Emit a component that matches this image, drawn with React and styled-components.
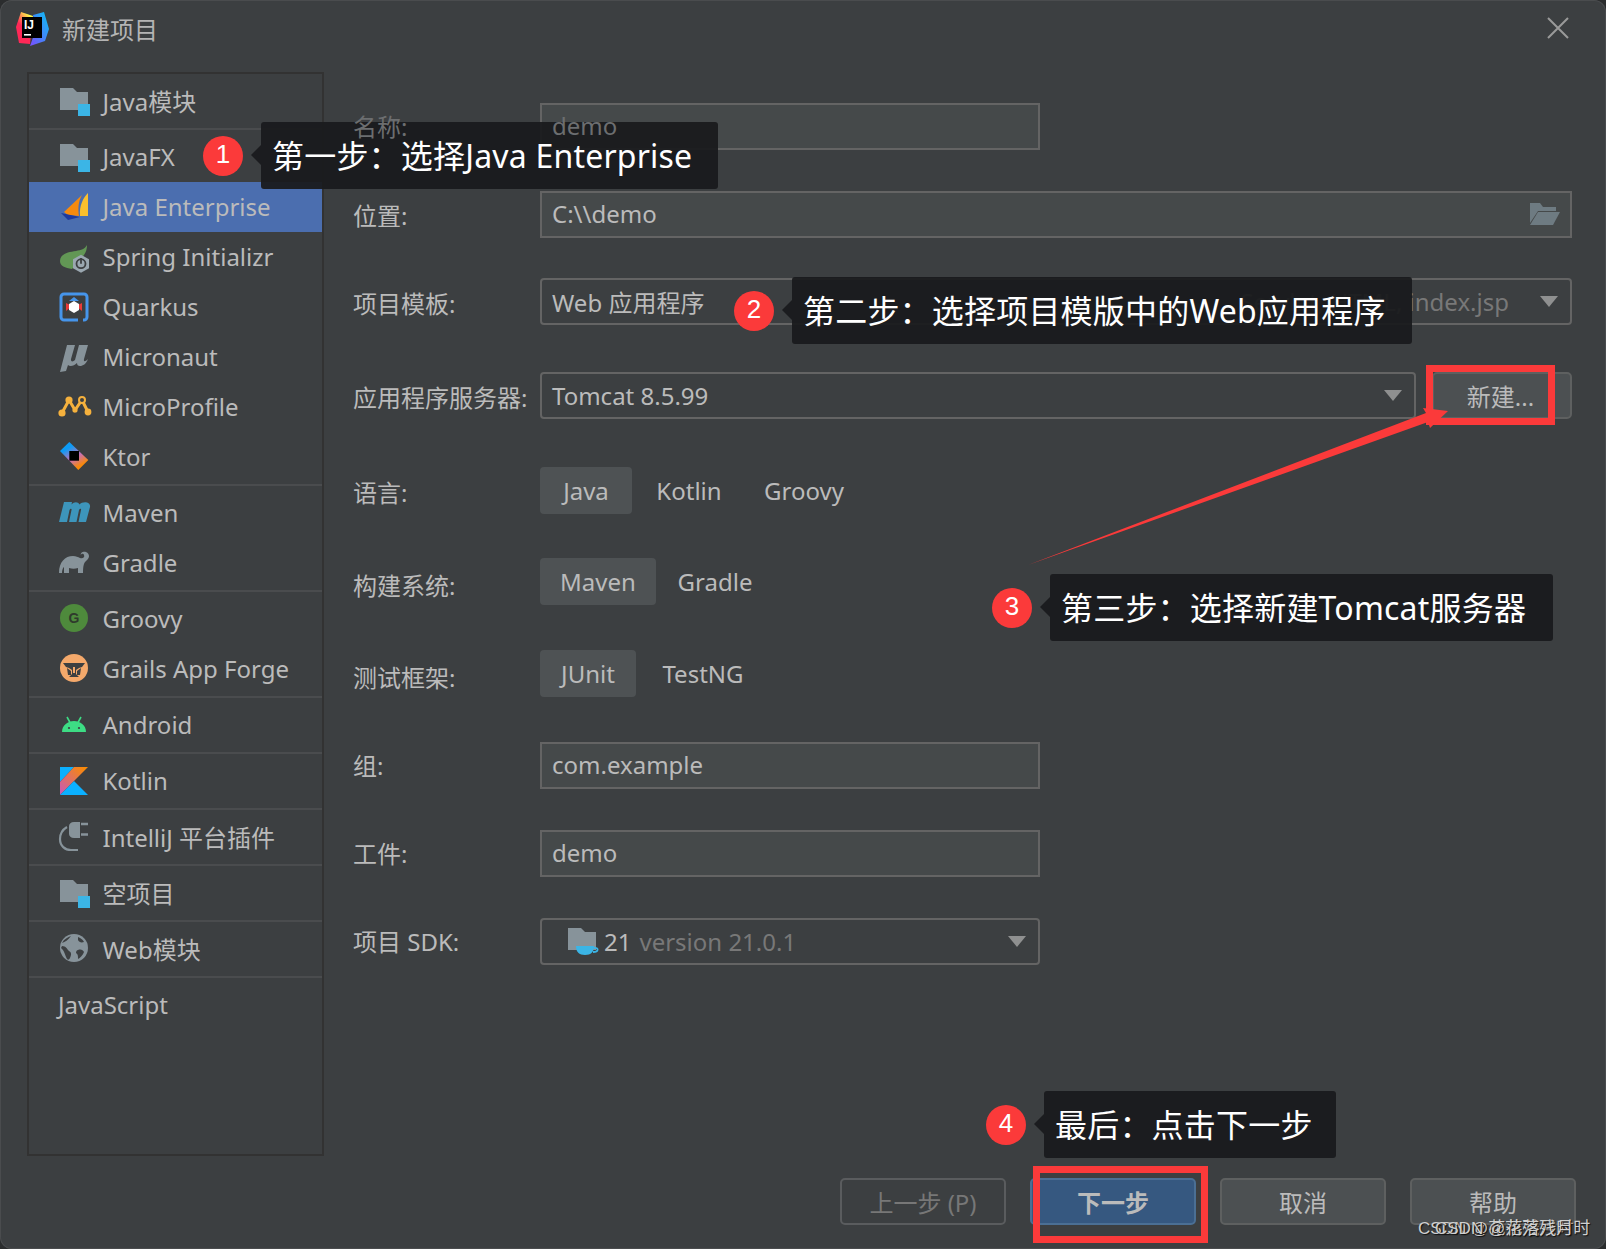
import React from 'react';
import styled, { createGlobalStyle } from 'styled-components';

const Global = createGlobalStyle`
  html, body { margin: 0; padding: 0; background: #2b2d2e; }
  * { box-sizing: border-box; }
`;
const FONT = `"Noto Sans", "Noto Sans CJK SC", sans-serif`;

const Win = styled.div`
  position: relative; width: 1606px; height: 1249px; overflow: hidden;
  display: flex; flex-direction: column;
  background: #3c3f41; color: #bbbbbb; font-family: ${FONT}; font-size: 24px;
  border-radius: 12px; box-shadow: inset 0 0 0 1px #4a4c4e;
`;
const TitleBar = styled.div`
  height: 72px; flex: none; display: flex; align-items: flex-start;
  padding: 11px 37px 0 16px;
`;
const TitleText = styled.div`
  margin: 2px 0 0 12px; font-size: 24px; line-height: 34px; color: #b4b4b4;
`;
const Close = styled.svg`margin: 6px 0 0 auto; display: block;`;
const Body = styled.div`
  flex: none; height: 1084px; display: flex; padding-left: 27px;
`;
const Sidebar = styled.div`
  width: 297px; flex: none; border: 2px solid #323232; padding-top: 2px;
  display: flex; flex-direction: column;
`;
const Item = styled.div`
  height: 50px; flex: none; display: flex; align-items: center; padding-left: 29px;
  background: ${p => (p.$on ? '#4b6eaf' : 'transparent')};
`;
const ItemLabel = styled.span`margin-bottom: 2px;`;
const Slot = styled.svg`
  width: 34px; height: 30px; flex: none; margin-right: 10.5px; display: block; overflow: visible;
`;
const Sep = styled.div`
  height: 2px; margin: 2px 0; flex: none; background: #4a4c4e;
`;
const Form = styled.div`
  flex: 1; padding: 31px 34px 0 29px; display: flex; flex-direction: column;
`;
const Row = styled.div`
  display: grid; grid-template-columns: 187px 1fr; grid-template-rows: 47px; align-items: center;
  height: 47px; margin-top: ${p => p.$gap}px;
`;
const Label = styled.div`
  color: #bbbbbb; white-space: nowrap; line-height: 47px;
  margin-top: ${p => (p.$dy || 0) * 2}px;
`;
const Ghost = styled.span`
  position: relative; z-index: 2; color: #6c6e70; white-space: nowrap;
`;
const Field = styled.div`
  height: 47px; display: flex; align-items: center; padding: 0 10px 2px;
  width: ${p => p.$w || '100%'};
  background: #45494a; border: 2px solid #646464; color: #bbbbbb;
`;
const Combo = styled.div`
  height: 47px; display: flex; align-items: center; padding: 0 12px 0 ${p => p.$pl || 10}px;
  width: ${p => p.$w || '100%'}; flex: ${p => (p.$grow ? 1 : 'none')};
  background: #3c3f41; border: 2px solid #646464; border-radius: 4px; color: #bbbbbb;
`;
const ComboSide = styled.span`margin-left: auto; margin-right: 31px; color: #787878; white-space: nowrap;`;
const Caret = styled.span`
  margin-left: ${p => (p.$auto ? 'auto' : '0')}; width: 0; height: 0; flex: none;
  border-left: 9px solid transparent; border-right: 9px solid transparent;
  border-top: 11px solid #8f9090;
`;
const Line = styled.div`display: flex; gap: 16px;`;
const NewBtn = styled.div`
  width: 140px; height: 47px; flex: none; display: flex; align-items: center; justify-content: center;
  padding-right: 3px; background: #4c5052; border: 2px solid #5e6060; border-radius: 5px; color: #bbbbbb;
`;
const Segs = styled.div`display: flex; align-items: center; height: 47px;`;
const Seg = styled.div`
  height: 47px; display: flex; align-items: center; justify-content: center; padding-bottom: 1px;
  width: ${p => p.$w}px; margin-right: ${p => p.$mr || 0}px; color: #bbbbbb;
  background: ${p => (p.$on ? '#4e5254' : 'transparent')}; border-radius: 4px;
`;
const Dim = styled.span`color: #787878; margin-left: 8px;`;
const Footer = styled.div`
  flex: 1; display: flex; justify-content: flex-end; gap: 24px; padding: 22px 30px 0 0;
`;
const Btn = styled.div`
  width: 166px; height: 47px; display: flex; align-items: center; justify-content: center;
  border-radius: 5px; border: 2px solid ${p => (p.$kind === 'primary' ? '#4b6f94' : p.$kind === 'off' ? '#5a5c5e' : '#5e6060')};
  background: ${p => (p.$kind === 'primary' ? '#365880' : p.$kind === 'off' ? 'transparent' : '#4c5052')};
  color: ${p => (p.$kind === 'off' ? '#777777' : '#bbbbbb')};
  font-weight: ${p => (p.$kind === 'primary' ? 700 : 400)};
`;

const Callout = styled.div`
  position: absolute; z-index: 1; left: ${p => p.$x}px; top: ${p => p.$y}px;
  display: flex; align-items: center; gap: 18px; height: 67px;
`;
const Badge = styled.div`
  width: 40px; height: 40px; border-radius: 50%; background: #fb3a3a; color: #fff; flex: none;
  display: flex; align-items: center; justify-content: center; padding-bottom: 4px;
  font-family: "Liberation Sans", sans-serif; font-size: 26px; line-height: 1;
`;
const Bubble = styled.div`
  position: relative; width: ${p => p.$w}px; height: 67px; padding-left: 11px;
  background: rgba(26, 27, 29, 0.94); border-radius: 3px; color: #fff;
  font-size: 32px; line-height: 67px; white-space: nowrap; letter-spacing: 0.2px;
  &::before {
    content: ''; position: absolute; left: -10px; top: 23px; width: 0; height: 0;
    border-top: 10px solid transparent; border-bottom: 10px solid transparent;
    border-right: 10px solid rgba(26, 27, 29, 0.94);
  }
`;
const RedBox = styled.div`
  position: absolute; z-index: 1; left: ${p => p.$x}px; top: ${p => p.$y}px; width: ${p => p.$w}px; height: ${p => p.$h}px;
  border: 7px solid #fb3a3a;
`;
const Arrow = styled.svg`position: absolute; z-index: 1; left: 0; top: 0; pointer-events: none;`;
const Mark = styled.div`
  position: absolute; z-index: 3; left: ${p => p.$x}px; top: 1216px; font-size: 17px; line-height: 26px;
  color: #d0d0d0; text-shadow: 1px 1px 1px #111; white-space: nowrap; font-family: "Liberation Sans", "Noto Sans CJK SC", sans-serif;
`;
const InputIcon = styled.svg`margin-left: auto; display: block;`;

const G = '#87939a';
const B = '#3bb5e6';
const FolderMod = () => (
  <Slot viewBox="0 0 34 30">
    <path d="M2 2h13l4 4h11v18H2z" fill={G} />
    <rect x="20" y="18" width="12" height="12" fill={B} />
  </Slot>
);
const JavaEE = () => (
  <Slot viewBox="0 0 34 30">
    <path d="M30 1V24H22C21 14 25 6 30 1Z" fill="#fbc02d" />
    <path d="M24 3C20 10 20 17 21 24L10 23L6 20Z" fill="#f68a0d" />
    <path d="M3 21L22 25L10 28Z" fill="#1e3a9e" />
  </Slot>
);
const Spring = () => (
  <Slot viewBox="0 0 34 30">
    <path d="M29 3C29 7 28 10 26 13L14 27C7 26 2 24 2 19C2 12 10 10 18 9C23 8 27 7 29 3Z" fill="#629755" />
    <path d="M23 12.7L31 17.200V26.200L23 30.700L15 26.200V17.200Z" fill="#9aa7b0" />
    <circle cx="23" cy="21.700" r="4.500" fill="none" stroke="#3c3f41" strokeWidth="1.800" />
    <path d="M23 16V21.700" stroke="#3c3f41" strokeWidth="1.800" />
  </Slot>
);
const Quarkus = () => (
  <Slot viewBox="0 0 34 30">
    <path d="M20 28H6a3 3 0 0 1-3-3V5a3 3 0 0 1 3-3h20a3 3 0 0 1 3 3v20a3 3 0 0 1-3 3h-1" fill="none" stroke="#4695eb" strokeWidth="3" />
    <path d="M8 11L14 14L8 19Z" fill="#e83a3a" />
    <path d="M24 11L18 14L24 19Z" fill="#e83a3a" />
    <path d="M16 5L21 9H11Z" fill="#4695eb" />
    <path d="M16 9L21 12V18L16 21L11 18V12Z" fill="#fff" />
  </Slot>
);
const Micronaut = () => (
  <Slot viewBox="0 0 34 30">
    <path d="M9 3H17L13 17C12.500 20 15 20 17 18L21 3H30L26 17C25.500 20 27 20 30 17C28 22 25 24 22 24C20 24 19 23 19 21C16 24 12 25 10 23L8 29L2 30Z" fill={G} />
  </Slot>
);
const MicroProfile = () => (
  <Slot viewBox="0 0 34 30">
    <path d="M4 21L11 8L17 18L24 8L30 20" fill="none" stroke="#f5b13d" strokeWidth="3" />
    <circle cx="4" cy="21" r="3.600" fill="#f5b13d" />
    <circle cx="11" cy="8" r="3.600" fill="#f5b13d" />
    <circle cx="17" cy="18" r="2.600" fill="#f5b13d" />
    <circle cx="24" cy="8" r="3" fill="#3c3f41" stroke="#f5b13d" strokeWidth="2" />
    <circle cx="30" cy="20" r="3.400" fill="#f5b13d" />
  </Slot>
);
const Ktor = () => (
  <Slot viewBox="0 0 34 30">
    <defs>
      <linearGradient id="kt" x1="0.2" y1="0" x2="0.8" y2="1">
        <stop offset="0.2" stopColor="#0d9bf5" />
        <stop offset="0.55" stopColor="#c86fb5" />
        <stop offset="0.85" stopColor="#f88909" />
      </linearGradient>
    </defs>
    <path d="M11.300 0L2 9L20.300 28L30.300 18Z" fill="url(#kt)" />
    <rect x="11.300" y="9" width="9.700" height="9.700" fill="#000" />
  </Slot>
);
const Maven = () => (
  <Slot viewBox="0 0 34 30">
    <path d="M1 24L6 4H14L13.500 6.500C16 3.500 20 3.500 21.500 6.500C24 3 33 3 32 9L28 24H20.500L23 12C23.500 10.500 22 10 21 12L18.500 24H11L13.500 12C14 10.500 12.500 10 11.500 12L9 24Z" fill="#3d95bb" />
  </Slot>
);
const Gradle = () => (
  <Slot viewBox="0 0 34 30">
    <path d="M1 25C1 14 7 8 15 8C18 8 20 9 22 10C25 11 27 9 26 7C25 5 23 6 23 7C22 5 25 3 28 4C32 6 32 10 28 13C26 15 25 17 25 25H20V20C17 21 14 21 11 20V25H6V19C4.500 20 4 23 4 25Z" fill={G} />
  </Slot>
);
const GText = styled.text`font-family: "Liberation Sans", sans-serif; font-size: 14px; font-weight: 700;`;
const Groovy = () => (
  <Slot viewBox="0 0 34 30">
    <circle cx="16" cy="14" r="14" fill="#4e8a3c" />
    <GText x="16" y="19" textAnchor="middle" fill="#2f3a2c">G</GText>
  </Slot>
);
const Grails = () => (
  <Slot viewBox="0 0 34 30">
    <circle cx="16" cy="14" r="14" fill="#f4a96b" />
    <path d="M5 9H27L24 13L21 14L18 16V20L21 23H11L14 20V16L11 14L8 13Z" fill="#3c3f41" />
    <path d="M9 14L13 17V21H10ZM23 14L19 17V21H22Z" fill="#3c3f41" />
    <path d="M15 13H17V19H15Z" fill="#f4a96b" />
  </Slot>
);
const Android = () => (
  <Slot viewBox="0 0 34 30">
    <path d="M4 22C4 15 10 11 16 11C22 11 28 15 28 22Z" fill="#3ddc84" />
    <path d="M9 7L12 12.500M23 7L20 12.500" stroke="#3ddc84" strokeWidth="1.600" />
    <circle cx="11" cy="18" r="1.100" fill="#3c3f41" />
    <circle cx="21" cy="18" r="1.100" fill="#3c3f41" />
  </Slot>
);
const Kotlin = () => (
  <Slot viewBox="0 0 34 30">
    <defs>
      <linearGradient id="kl" x1="1" y1="0" x2="0" y2="1">
        <stop offset="0.1" stopColor="#f88909" />
        <stop offset="1" stopColor="#c757bc" />
      </linearGradient>
    </defs>
    <path d="M2 1H16L2 16Z" fill="#0bb0ff" />
    <path d="M16 1H30L2 29V16Z" fill="url(#kl)" />
    <path d="M16 15L30 29H2Z" fill="#0bb0ff" />
  </Slot>
);
const Plugin = () => (
  <Slot viewBox="0 0 34 30">
    <path d="M22 0H16C13 0 11 2 11 4V12C11 14 13 16 16 16H22Z" fill={G} />
    <path d="M23 2H30M23 12.500H30" stroke={G} strokeWidth="2.400" />
    <path d="M9 5C4 8 2 12 2 17C2 24 7 28 13 28H20" fill="none" stroke={G} strokeWidth="2.200" />
  </Slot>
);
const Globe = () => (
  <Slot viewBox="0 0 34 30">
    <circle cx="16" cy="14" r="14" fill={G} />
    <path d="M4 9C7 8 10 6 13 2C10 3 6 5 4 9ZM4 12C8 12 9 15 11 17C13 18 14 20 12 24C11 26 10 26 9 25C7 21 6 16 3 14Z" fill="#3c3f41" />
    <path d="M20 16C23 15 25 16 26 18C25 21 22 24 20 25C20 22 20 20 18 19C18 17 19 16 20 16Z" fill="#3c3f41" />
    <path d="M20 3C23 4 25 6 26 8C23 9 21 8 20 6Z" fill="#3c3f41" />
  </Slot>
);
const SdkIcon = styled.svg`width: 36px; height: 30px; flex: none; display: block;`;
const Sdk = () => (
  <SdkIcon viewBox="0 0 36 30">
    <path d="M0 1H13L17 5H28V23H0Z" fill={G} />
    <path d="M8 19H26C26 25 23 28 17 28C11 28 8 25 8 19Z" fill={B} />
    <path d="M26 21C31 20 31 25 25 25" fill="none" stroke={B} strokeWidth="1.800" />
  </SdkIcon>
);
const LogoIcon = styled.svg`width: 34px; height: 36px; flex: none; display: block;`;
const LogoText = styled.text`font-family: "Liberation Sans", sans-serif; font-size: 12px; font-weight: 700; fill: #fff;`;
const Logo = () => (
  <LogoIcon viewBox="0 0 34 36">
    <defs>
      <linearGradient id="ij1" x1="0" y1="1" x2="0.6" y2="0">
        <stop offset="0" stopColor="#fe2857" />
        <stop offset="0.55" stopColor="#fe2857" />
        <stop offset="1" stopColor="#fcf84a" />
      </linearGradient>
      <linearGradient id="ij2" x1="0" y1="1" x2="1" y2="0">
        <stop offset="0" stopColor="#7b4bff" />
        <stop offset="1" stopColor="#07c3f2" />
      </linearGradient>
    </defs>
    <path d="M5 1L17 5L14 33L3 32L0 16Z" fill="url(#ij1)" />
    <path d="M17 4L28 1L33 18L29 30L14 35L20 18Z" fill="url(#ij2)" />
    <rect x="6" y="6" width="20" height="21" fill="#000" />
    <LogoText x="8" y="18">IJ</LogoText>
    <rect x="8" y="23" width="7" height="1.600" fill="#fff" />
  </LogoIcon>
);

const groups = [
  [[FolderMod, 'Java模块']],
  [[FolderMod, 'JavaFX'], [JavaEE, 'Java Enterprise', true], [Spring, 'Spring Initializr'], [Quarkus, 'Quarkus'], [Micronaut, 'Micronaut'], [MicroProfile, 'MicroProfile'], [Ktor, 'Ktor']],
  [[Maven, 'Maven'], [Gradle, 'Gradle']],
  [[Groovy, 'Groovy'], [Grails, 'Grails App Forge']],
  [[Android, 'Android']],
  [[Kotlin, 'Kotlin']],
  [[Plugin, 'IntelliJ 平台插件']],
  [[FolderMod, '空项目']],
  [[Globe, 'Web模块']],
];

export default function App() {
  return (
    <Win>
      <Global />
      <TitleBar>
        <Logo />
        <TitleText>新建项目</TitleText>
        <Close width="22" height="22" viewBox="0 0 22 22">
          <path d="M1 1L21 21M21 1L1 21" stroke="#9a9a9a" strokeWidth="2" />
        </Close>
      </TitleBar>
      <Body>
        <Sidebar>
          {groups.map((g, i) => (
            <React.Fragment key={i}>
              {g.map(([Ic, t, on]) => (
                <Item key={t} $on={on}><Ic /><ItemLabel>{t}</ItemLabel></Item>
              ))}
              <Sep />
            </React.Fragment>
          ))}
          <Item><ItemLabel>JavaScript</ItemLabel></Item>
        </Sidebar>
        <Form>
          <Row $gap={0}><Label><Ghost>名称:</Ghost></Label><Field $w="500px"><Ghost>demo</Ghost></Field></Row>
          <Row $gap={41}>
            <Label $dy={1}>位置:</Label>
            <Field>C:\\demo
              <InputIcon width="30" height="22" viewBox="0 0 30 22">
                <path d="M0 0H10L13 4H26V8H8L0 20Z" fill="#6e7b82" />
                <path d="M8 9H30L23 22H0Z" fill="#6e7b82" />
              </InputIcon>
            </Field>
          </Row>
          <Row $gap={40}>
            <Label $dy={2}>项目模板:</Label>
            <Combo>Web 应用程序<ComboSide>Servlet, HTML, index.jsp</ComboSide><Caret /></Combo>
          </Row>
          <Row $gap={47}>
            <Label $dy={2}>应用程序服务器:</Label>
            <Line><Combo $grow>Tomcat 8.5.99<Caret $auto /></Combo><NewBtn>新建...</NewBtn></Line>
          </Row>
          <Row $gap={48}>
            <Label $dy={2}>语言:</Label>
            <Segs><Seg $on $w={92} $mr={24}>Java</Seg><Seg $w={66} $mr={40}>Kotlin</Seg><Seg $w={84}>Groovy</Seg></Segs>
          </Row>
          <Row $gap={44}>
            <Label $dy={4}>构建系统:</Label>
            <Segs><Seg $on $w={116} $mr={22}>Maven</Seg><Seg $w={74}>Gradle</Seg></Segs>
          </Row>
          <Row $gap={45}>
            <Label $dy={4}>测试框架:</Label>
            <Segs><Seg $on $w={96} $mr={24}>JUnit</Seg><Seg $w={86}>TestNG</Seg></Segs>
          </Row>
          <Row $gap={45}><Label>组:</Label><Field $w="500px">com.example</Field></Row>
          <Row $gap={41}><Label>工件:</Label><Field $w="500px">demo</Field></Row>
          <Row $gap={41}>
            <Label>项目 SDK:</Label>
            <Combo $w="500px" $pl={26}><Sdk />21<Dim>version 21.0.1</Dim><Caret $auto /></Combo>
          </Row>
        </Form>
      </Body>
      <Footer>
        <Btn $kind="off">上一步 (P)</Btn>
        <Btn $kind="primary">下一步</Btn>
        <Btn>取消</Btn>
        <Btn>帮助</Btn>
      </Footer>

      <Callout $x={203} $y={122}><Badge>1</Badge><Bubble $w={457}>第一步：选择Java Enterprise</Bubble></Callout>
      <Callout $x={734} $y={277}><Badge>2</Badge><Bubble $w={620}>第二步：选择项目模版中的Web应用程序</Bubble></Callout>
      <Callout $x={992} $y={574}><Badge>3</Badge><Bubble $w={503}>第三步：选择新建Tomcat服务器</Bubble></Callout>
      <Callout $x={986} $y={1091}><Badge>4</Badge><Bubble $w={292}>最后：点击下一步</Bubble></Callout>
      <RedBox $x={1426} $y={365} $w={129} $h={60} />
      <RedBox $x={1033} $y={1166} $w={175} $h={77} />
      <Arrow width="1606" height="1249" viewBox="0 0 1606 1249">
        <path d="M1028 565L1426 413L1423 408L1448 411L1430 428L1428 422Z" fill="#fb3a3a" />
      </Arrow>
      <Mark $x={1418}>CSDN @花落残月时</Mark>
      <Mark $x={1435}>CSDN @花落残月时</Mark>
    </Win>
  );
}
